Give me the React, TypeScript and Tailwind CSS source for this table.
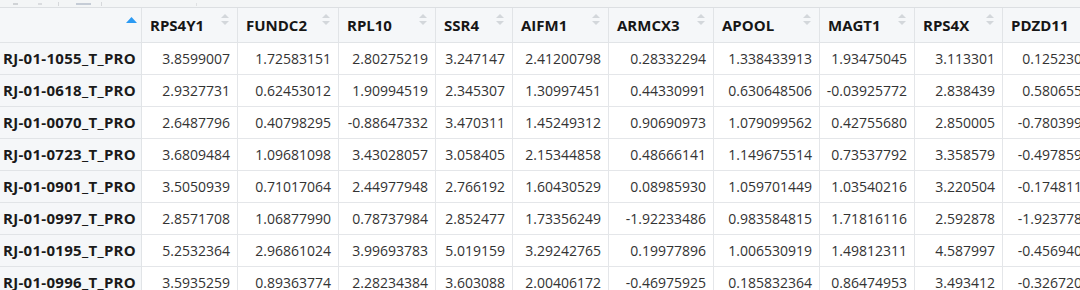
import React from "react";

interface Row {
  id: string;
  values: string[];
}

const columns = [
  "RPS4Y1",
  "FUNDC2",
  "RPL10",
  "SSR4",
  "AIFM1",
  "ARMCX3",
  "APOOL",
  "MAGT1",
  "RPS4X",
  "PDZD11",
];

const rows: Row[] = [
  { id: "RJ-01-1055_T_PRO", values: ["3.8599007", "1.72583151", "2.80275219", "3.247147", "2.41200798", "0.28332294", "1.338433913", "1.93475045", "3.113301", "0.12523045"] },
  { id: "RJ-01-0618_T_PRO", values: ["2.9327731", "0.62453012", "1.90994519", "2.345307", "1.30997451", "0.44330991", "0.630648506", "-0.03925772", "2.838439", "0.58065512"] },
  { id: "RJ-01-0070_T_PRO", values: ["2.6487796", "0.40798295", "-0.88647332", "3.470311", "1.45249312", "0.90690973", "1.079099562", "0.42755680", "2.850005", "-0.78039921"] },
  { id: "RJ-01-0723_T_PRO", values: ["3.6809484", "1.09681098", "3.43028057", "3.058405", "2.15344858", "0.48666141", "1.149675514", "0.73537792", "3.358579", "-0.49785901"] },
  { id: "RJ-01-0901_T_PRO", values: ["3.5050939", "0.71017064", "2.44977948", "2.766192", "1.60430529", "0.08985930", "1.059701449", "1.03540216", "3.220504", "-0.17481122"] },
  { id: "RJ-01-0997_T_PRO", values: ["2.8571708", "1.06877990", "0.78737984", "2.852477", "1.73356249", "-1.92233486", "0.983584815", "1.71816116", "2.592878", "-1.92377846"] },
  { id: "RJ-01-0195_T_PRO", values: ["5.2532364", "2.96861024", "3.99693783", "5.019159", "3.29242765", "0.19977896", "1.006530919", "1.49812311", "4.587997", "-0.45694012"] },
  { id: "RJ-01-0996_T_PRO", values: ["3.5935259", "0.89363774", "2.28234384", "3.603088", "2.00406172", "-0.46975925", "0.185832364", "0.86474953", "3.493412", "-0.32672034"] },
];

const SortIcon = () => (
  <svg width="8" height="11" viewBox="0 0 8 11" className="self-start mt-[6px] shrink-0">
    <path d="M4 0 L8 4 L0 4 Z" fill="#d3d7db" />
    <path d="M0 7 L8 7 L4 11 Z" fill="#d3d7db" />
  </svg>
);

const App: React.FC = () => {
  const grid =
    "grid grid-cols-[142px_96px_101px_97px_77px_96px_105px_106px_95px_88px_103px]";

  return (
    <div className="w-[1080px] h-[290px] overflow-hidden bg-white font-['Open_Sans',sans-serif] text-[14px]">
      {/* leftover toolbar strip, mostly scrolled off */}
      <div className="h-[8px] bg-[#f3f5f6] border-b border-[#dcdfe2] flex items-end pb-[1px] pl-[13px] gap-[20px]">
        <div className="w-[5px] h-[2px] mb-[1px] bg-[#d0d3d6]" />
        <div className="w-[4px] h-[2px] mb-[1px] bg-[#dadcdf]" />
        <div className="w-[1px] h-[4px] bg-[#d6d8db] -ml-[4px]" />
        <div className="w-[15px] h-[2px] mb-[1px] bg-[#c5ccd6] -ml-[3px]" />
        <div className="w-[1px] h-[4px] bg-[#d6d8db] -ml-[10px]" />
        <div className="w-[1px] h-[3px] bg-[#dfe1e3] ml-[74px]" />
      </div>

      <div className={`${grid} w-max`}>
        {/* header */}
        <div className="h-[35px] bg-[#f5f7f9] border-r border-b border-[#e1e4e7] flex justify-end items-start pt-[9px] pr-[4px]">
          <svg width="11" height="6" viewBox="0 0 11 6">
            <path d="M5.5 0 L11 6 L0 6 Z" fill="#2b9af3" />
          </svg>
        </div>
        {columns.map((col) => (
          <div
            key={col}
            className="h-[35px] bg-[#f5f7f9] border-r border-b border-[#e1e4e7] flex items-end justify-between pl-[8px] pr-[8px] pb-[6px] font-bold text-[15px] text-[#161616] whitespace-nowrap"
          >
            <span>{col}</span>
            <SortIcon />
          </div>
        ))}

        {/* body */}
        {rows.map((row) => (
          <React.Fragment key={row.id}>
            <div className="h-[32px] bg-[#f5f7f9] border-r border-b border-[#e1e4e7] flex items-center pl-[3px] font-bold text-[15px] tracking-[0.3px] text-[#1a1a1a] whitespace-nowrap">
              {row.id}
            </div>
            {row.values.map((v, i) => (
              <div
                key={i}
                className="h-[32px] bg-white border-r border-b border-[#e4e6e9] flex items-center justify-end pr-[7px] text-[#333333] whitespace-nowrap"
              >
                {v}
              </div>
            ))}
          </React.Fragment>
        ))}
      </div>
    </div>
  );
};

export default App;
